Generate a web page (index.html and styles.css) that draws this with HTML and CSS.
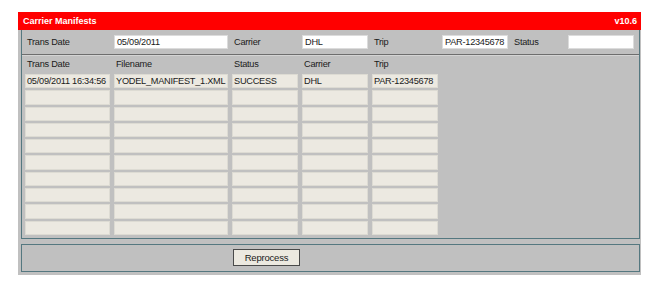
FILE: index.html
```html
<!DOCTYPE html>
<html lang="en">
<head>
  <meta charset="UTF-8" />
  <title>Carrier Manifests</title>
  <link rel="stylesheet" href="styles.css">
</head>
<body>
  <div class="app">
    <div class="titlebar">
      <span>Carrier Manifests</span>
      <span>v10.6</span>
    </div>

    <div class="frame">
      <div class="panel">
        <div class="filters cols">
          <label>Trans Date</label>
          <div class="field">05/09/2011</div>
          <label>Carrier</label>
          <div class="field">DHL</div>
          <label>Trip</label>
          <div class="field">PAR-12345678</div>
          <label>Status</label>
          <div class="field"></div>
        </div>

        <div class="grid">
          <div class="cols head">
            <span>Trans Date</span>
            <span>Filename</span>
            <span>Status</span>
            <span>Carrier</span>
            <span>Trip</span>
          </div>
          <div class="rows" id="rows"></div>
        </div>
      </div>

      <div class="actions">
        <button class="btn">Reprocess</button>
      </div>
    </div>
  </div>

  <script>
    var data = [
      ["05/09/2011 16:34:56", "YODEL_MANIFEST_1.XML", "SUCCESS", "DHL", "PAR-12345678"]
    ];
    var rows = document.getElementById("rows");
    for (var i = 0; i < 10; i++) {
      var row = document.createElement("div");
      row.className = "cols row";
      for (var c = 0; c < 5; c++) {
        var cell = document.createElement("div");
        cell.className = "cell";
        cell.textContent = data[i] ? data[i][c] : "";
        row.appendChild(cell);
      }
      rows.appendChild(row);
    }
  </script>
</body>
</html>
```

FILE: styles.css
```css
body {
  margin: 0;
  background: #fff;
  font-family: "Liberation Sans", Arial, sans-serif;
  font-size: 9.2px;
  letter-spacing: -0.25px;
  color: #1a1a1a;
}

.app {
  width: 623px;
  margin: 12px 0 0 18px;
}

.titlebar {
  display: flex;
  justify-content: space-between;
  align-items: center;
  height: 18px;
  padding: 0 4px 0 5px;
  background: #ff0000;
  color: #fff;
  font-weight: bold;
  font-size: 9px;
  letter-spacing: 0;
}

.frame {
  background: #c0c0c0;
  padding: 0 1px 3px 3px;
}

.panel {
  border: 1px solid #557880;
  border-top: none;
  padding: 0 0 3px 3px;
}

.cols {
  display: grid;
  grid-template-columns: 85px 114px 66px 66px 66px 66px 52px 66px;
  column-gap: 4px;
  align-items: center;
}

.filters {
  height: 14px;
  padding: 5px 0 5px;
  border-bottom: 1px solid #6e6e6e;
  box-shadow: 0 1px 0 #d4d4d4;
  margin-left: -3px;
  padding-left: 3px;
}

.filters label {
  padding-left: 2px;
}

.field {
  height: 12px;
  line-height: 12px;
  padding-left: 2px;
  background: #fff;
  border: 1px solid #dcdcdc;
  white-space: nowrap;
  overflow: hidden;
}

.head {
  height: 14px;
  margin-top: 2px;
}

.head span {
  padding-left: 2px;
}

.rows {
  display: grid;
  row-gap: 2px;
  margin-top: 3px;
}

.row {
  grid-template-columns: 85px 114px 66px 66px 66px;
}

.cell {
  height: 12.3px;
  line-height: 12px;
  padding-left: 1px;
  background: #ece9e1;
  border: 1px solid #dddbd3;
  white-space: nowrap;
  overflow: hidden;
}

.actions {
  margin-top: 5px;
  height: 26px;
  border: 1px solid #557880;
  display: flex;
  align-items: center;
  padding-left: 211px;
}

.btn {
  width: 67px;
  height: 17px;
  padding: 0;
  background: #ece9e0;
  border: 1px solid #4a4a4a;
  font-family: "Liberation Sans", Arial, sans-serif;
  font-size: 9.5px;
  letter-spacing: -0.2px;
  color: #1a1a1a;
}
```
